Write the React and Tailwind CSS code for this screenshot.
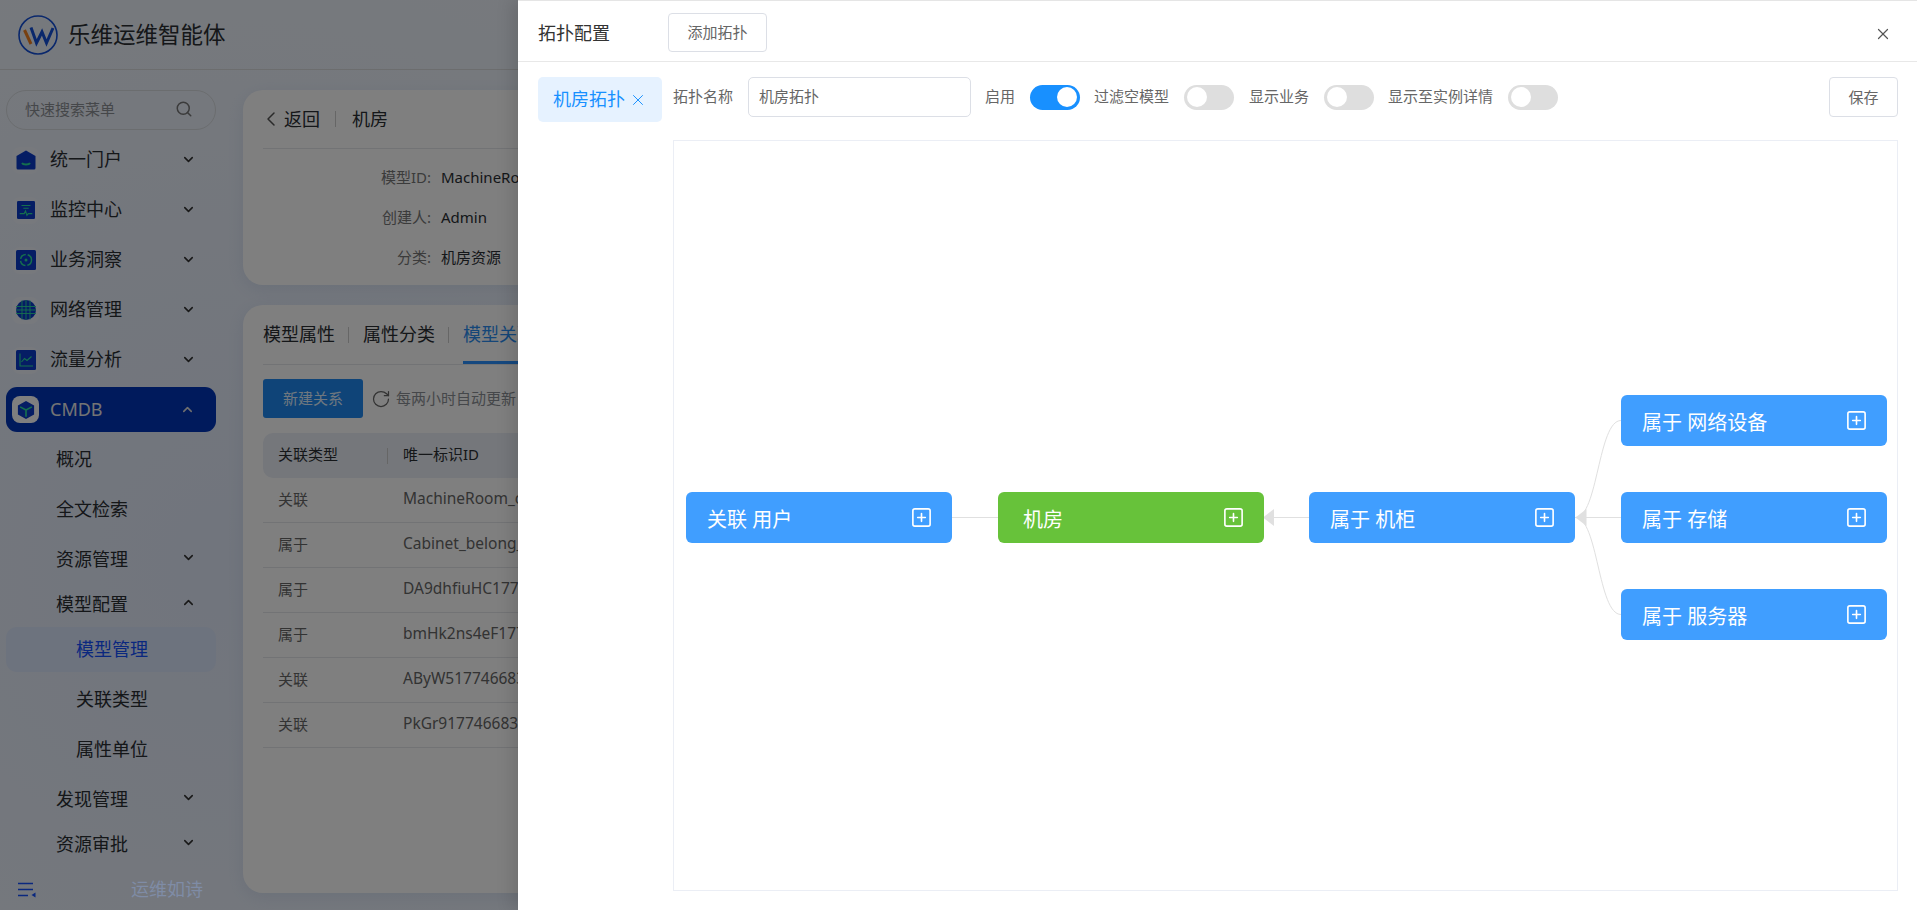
import { ChevronDown, ChevronLeft, ChevronUp, RotateCw, Search, SquarePlus, X } from "lucide-react";

function HomeIcon() {
  return (
    <svg viewBox="0 0 20 20" className="w-[20px] h-[20px]">
      <path d="M10 .5 19.500 6v12a1.500 1.500 0 0 1-1.500 1.500H2A1.500 1.500 0 0 1 .5 18V6z" fill="#0a3ac8" />
      <path d="M6 13c1 2 7 2 8 0" fill="none" stroke="#2adf9a" strokeWidth="1.800" />
    </svg>
  );
}

function MonitorIcon() {
  return (
    <svg viewBox="0 0 20 20" className="w-[20px] h-[18px]">
      <rect width="20" height="20" rx="1.500" fill="#0a3ac8" />
      <path d="M5 5h10M7 8h6" stroke="#2adf9a" strokeWidth="1.200" />
      <path d="M3 14h5l1.500-3 1.500 5 1.500-2h4.500" fill="none" stroke="#2adf9a" strokeWidth="1.200" />
    </svg>
  );
}

function InsightIcon() {
  return (
    <svg viewBox="0 0 20 20" className="w-[20px] h-[20px]">
      <rect width="20" height="20" rx="1.500" fill="#0a3ac8" />
      <circle cx="10" cy="10" r="5.500" fill="none" stroke="#2adf9a" strokeWidth="1.500" strokeDasharray="7 2" />
      <circle cx="10" cy="10" r="1.500" fill="#2adf9a" />
    </svg>
  );
}

function GlobeIcon() {
  return (
    <svg viewBox="0 0 20 20" className="w-[20px] h-[20px]">
      <circle cx="10" cy="10" r="10" fill="#0a3ac8" />
      <path d="M0 6.500h20M0 10h20M0 13.500h20M6 .5v19M10 0v20M14 .5v19" stroke="#2adf9a" strokeWidth=".9" />
    </svg>
  );
}

function TrafficIcon() {
  return (
    <svg viewBox="0 0 20 20" className="w-[20px] h-[20px]">
      <rect width="20" height="20" rx="1.500" fill="#0a3ac8" />
      <path d="M4 3.500v12.500h13M5.500 12l3-3.500 2.500 2 4.500-4" fill="none" stroke="#2adf9a" strokeWidth="1.100" />
    </svg>
  );
}

function CubeIcon() {
  return (
    <svg viewBox="0 0 20 22" className="w-[18px] h-[20px]">
      <path d="M10 1 19 6v10l-9 5-9-5V6z" fill="#0a3ac8" />
      <path d="M3.500 7.500 10 11l6.500-3.500M10 11v7.500" fill="none" stroke="#2adf9a" strokeWidth="1.800" />
    </svg>
  );
}

const topMenus = [
  { label: "统一门户", icon: <HomeIcon /> },
  { label: "监控中心", icon: <MonitorIcon /> },
  { label: "业务洞察", icon: <InsightIcon /> },
  { label: "网络管理", icon: <GlobeIcon /> },
  { label: "流量分析", icon: <TrafficIcon /> },
];

const relations = [
  ["关联", "MachineRoom_c"],
  ["属于", "Cabinet_belong_"],
  ["属于", "DA9dhfiuHC1774"],
  ["属于", "bmHk2ns4eF1774"],
  ["关联", "AByW517746683"],
  ["关联", "PkGr9177466834"],
];

function SubRow({ className, children, arrow }) {
  return (
    <div className={`flex items-center justify-between pl-[56px] pr-[47px] ${className}`}>
      <span className="pb-[1px]">{children}</span>
      {arrow === "down" && <ChevronDown size={15} strokeWidth={2.500} className="mb-[5px] text-[#333]" />}
      {arrow === "up" && <ChevronUp size={15} strokeWidth={2.500} className="mb-[5px] text-[#333]" />}
    </div>
  );
}

function Sidebar() {
  return (
    <aside className="relative w-[243px] shrink-0 pt-[20px] text-[18px] text-[#2a2e33]">
      <div className="mx-[6px] flex h-[40px] w-[210px] items-center justify-between rounded-full border border-[#d6dade] pl-[18px] pr-[22px] text-[15px] text-[#8b8f94]">
        <span className="pb-[2px]">快速搜索菜单</span>
        <Search size={18} className="mb-[3px] text-[#777]" />
      </div>
      <nav className="mt-[5px]">
        {topMenus.map((m) => (
          <div key={m.label} className="flex h-[50px] items-center justify-between pl-[12px] pr-[47px]">
            <div className="flex items-center gap-[11px]">
              <span className="flex h-[27px] w-[27px] items-center justify-center rounded-[8px] bg-[#eef2fb]">{m.icon}</span>
              <span className="pb-[1px]">{m.label}</span>
            </div>
            <ChevronDown size={15} strokeWidth={2.500} className="mb-[1px] text-[#333]" />
          </div>
        ))}
        <div className="mx-[6px] mt-[2px] flex h-[45px] w-[210px] items-center justify-between rounded-[11px] bg-[#0034b8] pl-[6px] pr-[21px] text-[#e8e8e8]">
          <div className="flex items-center gap-[11px]">
            <span className="flex h-[27px] w-[27px] items-center justify-center rounded-[8px] bg-white">
              <CubeIcon />
            </span>
            <span className="pb-[1px]">CMDB</span>
          </div>
          <ChevronUp size={15} strokeWidth={2.500} className="text-[#ddd]" />
        </div>
        <SubRow className="mt-[3px] h-[50px]">概况</SubRow>
        <SubRow className="h-[50px]">全文检索</SubRow>
        <SubRow className="h-[50px]" arrow="down">资源管理</SubRow>
        <SubRow className="h-[40px]" arrow="up">模型配置</SubRow>
        <div className="mx-[6px] mt-[2px] flex h-[45px] w-[210px] items-center rounded-[11px] bg-[#dbe6fc] pb-[1px] pl-[70px] text-[#1450ff]">模型管理</div>
        <div className="mt-[3px] flex h-[50px] items-center pb-[1px] pl-[76px]">关联类型</div>
        <div className="flex h-[50px] items-center pb-[1px] pl-[76px]">属性单位</div>
        <SubRow className="h-[50px]" arrow="down">发现管理</SubRow>
        <SubRow className="h-[40px]" arrow="down">资源审批</SubRow>
      </nav>
      <div className="mt-[5px] flex h-[40px] items-center justify-between pl-[18px] pr-[40px]">
        <svg viewBox="0 0 18 16" className="h-[16px] w-[18px]">
          <path d="M0 1.500h15M0 7.500h15M0 13.500h10" stroke="#1450ff" strokeWidth="1.600" />
          <path d="M17.500 10.500v5l-4-2.500z" fill="#1450ff" />
        </svg>
        <span className="relative z-10 pb-[2px] text-[#7f8ca6]">运维如诗</span>
      </div>
    </aside>
  );
}

function Main() {
  return (
    <main className="flex-1 pr-[20px] pt-[20px] text-[#2a2e33]">
      <section className="h-[195px] rounded-[20px] bg-white px-[20px] shadow-[0_4px_16px_rgba(90,120,170,0.12)]">
        <div className="flex h-[59px] items-center border-b border-[#e4e7ea] text-[18px]">
          <ChevronLeft size={24} strokeWidth={1.500} className="ml-[-4px] text-[#555]" />
          <span className="ml-[1px]">返回</span>
          <span className="ml-[15px] mr-[16px] h-[16px] w-px bg-[#ccc]" />
          <span>机房</span>
        </div>
        <div className="pt-[8px] text-[15px]">
          {[["模型ID:", "MachineRoom"], ["创建人:", "Admin"], ["分类:", "机房资源"]].map(([k, v]) => (
            <div key={k} className="flex h-[40px] items-center gap-[10px]">
              <span className="w-[168px] text-right text-[#777]">{k}</span>
              <span>{v}</span>
            </div>
          ))}
        </div>
      </section>
      <section className="mt-[20px] h-[588px] rounded-[20px] bg-white px-[20px] shadow-[0_4px_16px_rgba(90,120,170,0.12)]">
        <div className="flex h-[60px] items-center border-b border-[#e4e7ea] text-[18px]">
          <span>模型属性</span>
          <span className="ml-[13px] mr-[14px] h-[16px] w-px bg-[#ccc]" />
          <span>属性分类</span>
          <span className="ml-[13px] mr-[14px] h-[16px] w-px bg-[#ccc]" />
          <span className="flex h-full items-center border-b-[3px] border-[#2a90ff] pt-[3px] text-[#2a8cf0]">模型关联</span>
        </div>
        <div className="mt-[14px] flex items-center text-[15px]">
          <span className="flex h-[39px] w-[100px] items-center justify-center rounded-[3px] bg-[#1e88f0] text-[#dfefff]">新建关系</span>
          <RotateCw size={20} strokeWidth={1.500} className="ml-[8px] text-[#666]" />
          <span className="ml-[5px] text-[#8b8f94]">每两小时自动更新</span>
        </div>
        <div className="mt-[15px] flex h-[45px] items-center rounded-[10px] bg-[#eaeef6] text-[15px]">
          <span className="w-[124px] pb-[2px] pl-[15px]">关联类型</span>
          <span className="h-[16px] w-px bg-[#ccc]" />
          <span className="pb-[2px] pl-[15px]">唯一标识ID</span>
        </div>
        {relations.map(([t, id]) => (
          <div key={id} className="flex h-[45px] items-center border-b border-[#e4e7ea] pb-[2px] text-[15px] text-[#666]">
            <span className="w-[125px] pl-[15px]">{t}</span>
            <span className="whitespace-nowrap pl-[15px] text-[15.500px]">{id}</span>
          </div>
        ))}
      </section>
    </main>
  );
}

function Switch({ on }) {
  return (
    <span className={`flex h-[25px] w-[50px] shrink-0 items-center rounded-full px-[3px] ${on ? "justify-end bg-[#1890ff]" : "justify-start bg-[#dedede]"}`}>
      <span className="h-[20px] w-[20px] rounded-full bg-white" />
    </span>
  );
}

function Node({ className, label, green }) {
  return (
    <div className={`absolute flex h-[51px] w-[266px] items-center justify-between rounded-[6px] pr-[19px] text-[20px] text-white ${green ? "bg-[#67c23a] pl-[25px]" : "bg-[#409eff] pl-[21px]"} ${className}`}>
      <span className="mt-[5px] whitespace-pre">{label}</span>
      <SquarePlus size={23} strokeWidth={1.700} />
    </div>
  );
}

function TopoCanvas() {
  return (
    <div className="relative mt-[23px] h-[751px] border border-[#ebeef5]">
      <svg className="absolute inset-0 h-full w-full" fill="none" stroke="#e0e0e0" strokeWidth="1">
        <path d="M278 376.500H324M600 376.500H635M901 376.500H947" />
        <path d="M901.500 376.500C924 376.500 924 279.500 947 279.500" />
        <path d="M901.500 376.500C924 376.500 924 473.500 947 473.500" />
        <path d="M589 376.500 600 368V385z" fill="#e0e0e0" stroke="none" />
        <path d="M901.500 376.500 912.500 368V385z" fill="#e0e0e0" stroke="none" />
      </svg>
      <Node className="left-[12px] top-[351px]" label="关联 用户" />
      <Node className="left-[324px] top-[351px]" label="机房" green />
      <Node className="left-[635px] top-[351px]" label="属于 机柜" />
      <Node className="left-[947px] top-[254px]" label="属于 网络设备" />
      <Node className="left-[947px] top-[351px]" label="属于 存储" />
      <Node className="left-[947px] top-[448px]" label="属于 服务器" />
    </div>
  );
}

function Drawer() {
  return (
    <div className="absolute inset-y-0 right-0 w-[1399px] border-t border-[#e5e5e5] bg-white shadow-[-6px_0_16px_rgba(0,0,0,0.12)]">
      <div className="flex h-[61px] items-center border-b border-[#e8e8e8] pl-[20px] pr-[25px]">
        <span className="mt-[4px] text-[18px] text-[#333]">拓扑配置</span>
        <button className="ml-[58px] mt-[3px] h-[39px] w-[99px] rounded-[4px] border border-[#dcdfe6] text-[15px] text-[#666]">添加拓扑</button>
        <X size={18} strokeWidth={1.600} className="ml-auto mt-[5px] text-[#555]" />
      </div>
      <div className="flex gap-[11px] pl-[20px] pr-[19px] pt-[15px]">
        <div className="flex h-[45px] w-[124px] shrink-0 items-center rounded-[5px] bg-[#e6f2ff] pl-[15px] text-[18px] text-[#1890ff]">
          机房拓扑
          <X size={18} strokeWidth={1.300} className="ml-[4px]" />
        </div>
        <div className="min-w-0 flex-1">
          <div className="flex h-[40px] items-center text-[15px] text-[#666]">
            <span className="pb-[2px]">拓扑名称</span>
            <span className="ml-[15px] flex h-[40px] w-[223px] items-center rounded-[5px] border border-[#dcdfe6] pb-[2px] pl-[10px]">机房拓扑</span>
            <span className="ml-[14px] pb-[2px]">启用</span>
            <span className="ml-[15px]"><Switch on /></span>
            <span className="ml-[14px] pb-[2px]">过滤空模型</span>
            <span className="ml-[15px]"><Switch /></span>
            <span className="ml-[15px] pb-[2px]">显示业务</span>
            <span className="ml-[15px]"><Switch /></span>
            <span className="ml-[14px] pb-[2px]">显示至实例详情</span>
            <span className="ml-[15px]"><Switch /></span>
            <button className="ml-auto h-[40px] w-[69px] rounded-[4px] border border-[#dcdfe6] text-[15px] text-[#666]">保存</button>
          </div>
          <TopoCanvas />
        </div>
      </div>
    </div>
  );
}

export default function App() {
  return (
    <div className="relative h-[910px] w-[1917px] overflow-hidden bg-[radial-gradient(circle_at_230px_560px,#e2eafa,#f8fbfc_65%)] font-['Noto_Sans','Noto_Sans_CJK_SC',sans-serif]">
      <header className="flex h-[70px] items-center gap-[10px] border-b border-[#d8dadc] pl-[18px]">
        <svg viewBox="0 0 40 40" className="h-[40px] w-[40px]">
          <circle cx="20" cy="20" r="19" fill="none" stroke="#1450d8" strokeWidth="1.600" />
          <path d="M6.500 15 13 29" stroke="#f08020" strokeWidth="3" fill="none" />
          <path d="M13 12.500 18.500 28 24 17 28.500 28 35 13" stroke="#1450d8" strokeWidth="3" fill="none" />
        </svg>
        <span className="text-[22.500px] text-[#2a2e33]">乐维运维智能体</span>
      </header>
      <div className="flex">
        <Sidebar />
        <Main />
      </div>
      <div className="absolute inset-0 bg-black/50" />
      <Drawer />
    </div>
  );
}
